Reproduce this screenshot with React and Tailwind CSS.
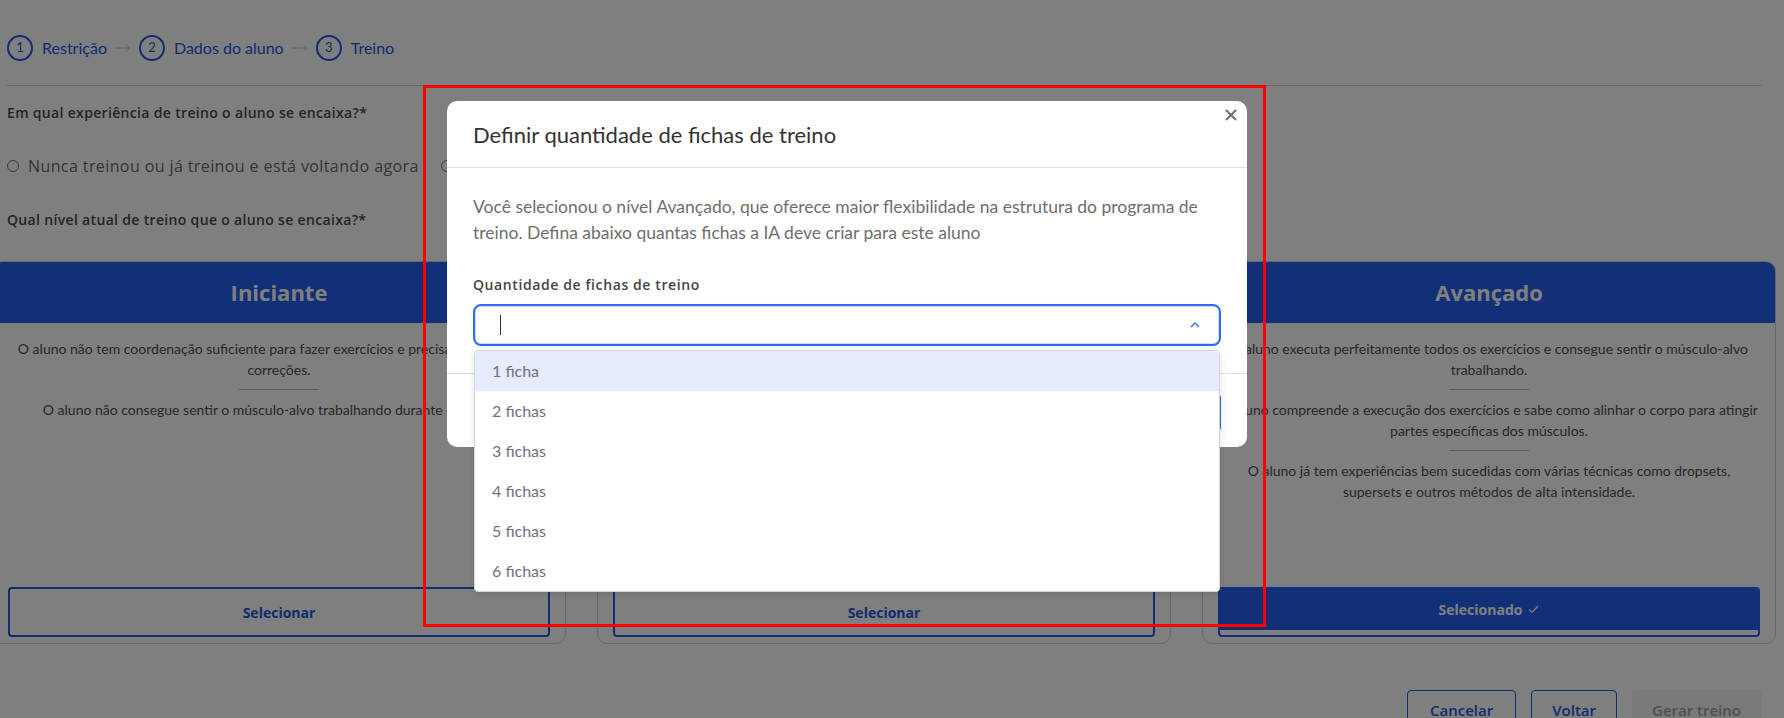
import React from "react";

const P = "font-['Open_Sans',sans-serif]";
const N = "font-['Lato',sans-serif]";

function Step({ n, label }) {
  return (
    <div className="flex items-center gap-[9px]">
      <div className={`w-[26px] h-[26px] rounded-full border-2 border-[#2458e0] flex items-center justify-center text-[13px] text-[#2458e0] ${N}`}>{n}</div>
      <span className={`text-[16px] text-[#2458e0] ${N}`}>{label}</span>
    </div>
  );
}

function Arrow() {
  return (
    <svg width="16" height="8" viewBox="0 0 16 8">
      <path d="M0 4H15M11.5 1L15 4L11.5 7" fill="none" stroke="#c4c4c4" strokeWidth="1" />
    </svg>
  );
}

function Card({ title, paras, selected }) {
  return (
    <div className="w-[574px] h-[383px] shrink-0 border border-[#d0d0d0] rounded-[10px] overflow-hidden flex flex-col">
      <div className={`h-[61px] shrink-0 bg-[#2260f0] flex items-center justify-center text-white text-[22px] font-bold ${P}`}>{title}</div>
      <div className={`px-[16px] pt-[15px] text-center text-[14px] leading-[21px] text-[#505050] ${N}`}>
        {paras.map((p, i) => (
          <div key={i}>
            {i > 0 && <div className="w-[80px] h-px bg-[#bdbdbd] mx-auto mt-[9px] mb-[9px]" />}
            <p>{p}</p>
          </div>
        ))}
      </div>
      {selected ? (
        <div className="mt-auto mx-[15px] mb-[6px] h-[50px] border-2 border-[#2260f0] rounded-[4px] flex flex-col overflow-hidden">
          <div className={`h-[41px] bg-[#2260f0] flex items-center justify-center gap-[6px] text-white text-[14px] font-bold ${P}`}>
            Selecionado
            <svg width="11" height="9" viewBox="0 0 11 9"><path d="M1 4.5L4 7.5L10 1" fill="none" stroke="#fff" strokeWidth="1.2" /></svg>
          </div>
        </div>
      ) : (
        <div className={`mt-auto mx-[15px] mb-[6px] h-[50px] border-2 border-[#2458e0] rounded-[4px] flex items-center justify-center text-[#2458e0] text-[14px] font-bold ${P}`}>
          Selecionar
        </div>
      )}
    </div>
  );
}

export default function App() {
  return (
    <div className="relative w-[1784px] h-[718px] overflow-hidden bg-white">
      <div className="pl-[7px] pr-[23px]">
        <div className="pt-[35px] flex items-center gap-[8px]">
          <Step n="1" label="Restrição" />
          <Arrow />
          <Step n="2" label="Dados do aluno" />
          <Arrow />
          <Step n="3" label="Treino" />
        </div>
        <div className="mt-[24px] border-t border-[#cccccc]" />
        <div className={`mt-[17px] text-[14px] leading-[20px] font-semibold tracking-[0.33px] text-[#4a4a4a] ${P}`}>Em qual experiência de treino o aluno se encaixa?*</div>
        <div className={`mt-[31px] flex items-center gap-[22px] text-[16px] leading-[24px] tracking-[0.4px] text-[#6a6a6a] ${P}`}>
          <label className="flex items-center gap-[9px]">
            <span className="w-[12px] h-[12px] rounded-full border border-[#777]" />
            Nunca treinou ou já treinou e está voltando agora
          </label>
          <label className="flex items-center gap-[9px]">
            <span className="w-[12px] h-[12px] rounded-full border border-[#777]" />
            Treina regularmente há mais de 6 meses
          </label>
        </div>
        <div className={`mt-[32px] text-[14px] leading-[20px] font-semibold tracking-[0.33px] text-[#4a4a4a] ${P}`}>Qual nível atual de treino que o aluno se encaixa?*</div>
        <div className="mt-[31px] ml-[-15px] flex gap-[31px]">
          <Card
            title="Iniciante"
            paras={[
              "O aluno não tem coordenação suficiente para fazer exercícios e precisa de constantes correções.",
              "O aluno não consegue sentir o músculo-alvo trabalhando durante o exercício.",
            ]}
          />
          <Card
            title="Intermediário"
            paras={[
              "O aluno executa bem a maioria dos exercícios e sente o músculo-alvo trabalhando.",
              "O aluno ainda precisa de algumas correções em exercícios mais complexos.",
            ]}
          />
          <Card
            title="Avançado"
            selected
            paras={[
              "O aluno executa perfeitamente todos os exercícios e consegue sentir o músculo-alvo trabalhando.",
              "O aluno compreende a execução dos exercícios e sabe como alinhar o corpo para atingir partes específicas dos músculos.",
              "O aluno já tem experiências bem sucedidas com várias técnicas como dropsets, supersets e outros métodos de alta intensidade.",
            ]}
          />
        </div>
        <div className={`mt-[46px] flex justify-end gap-[15px] text-[15px] font-semibold ${P}`}>
          <button className="h-[40px] px-[22px] border border-[#2458e0] rounded-[4px] text-[#2458e0]">Cancelar</button>
          <button className="h-[40px] px-[20px] border border-[#2458e0] rounded-[4px] text-[#2458e0]">Voltar</button>
          <button className="h-[40px] px-[20px] rounded-[4px] bg-[#f2f2f2] text-[#a0a0a0]">Gerar treino</button>
        </div>
      </div>

      <div className="absolute inset-0 bg-black/50" />

      <div className="absolute left-[447px] top-[101px] w-[800px] bg-white rounded-[10px]">
        <div className="h-[67px] px-[26px] flex items-center border-b border-[#e3e3e3]">
          <span className={`text-[22px] text-[#333] ${N}`}>Definir quantidade de fichas de treino</span>
        </div>
        <svg className="absolute left-[778px] top-[8px]" width="12" height="12" viewBox="0 0 12 12">
          <path d="M1 1L11 11M11 1L1 11" stroke="#707070" strokeWidth="2" />
        </svg>
        <div className="px-[26px] pt-[26px] pb-[27px]">
          <p className={`text-[17.5px] leading-[26px] text-[#6e6e6e] ${N}`}>
            Você selecionou o nível Avançado, que oferece maior flexibilidade na estrutura do programa de
            <br />
            treino. Defina abaixo quantas fichas a IA deve criar para este aluno
          </p>
          <div className={`mt-[29px] text-[14px] leading-[20px] font-semibold tracking-[0.6px] text-[#444] ${P}`}>Quantidade de fichas de treino</div>
          <div className="relative mt-[9px] h-[42px] border-2 border-[#2f6bf0] rounded-[8px] shadow-[inset_0_0_0_1px_#d3defb]">
            <div className="absolute left-[25px] top-[9px] h-[20px] w-px bg-[#333]" />
            <svg className="absolute right-[19px] top-[16px]" width="10" height="6" viewBox="0 0 10 6">
              <path d="M1 5L5 1L9 5" fill="none" stroke="#2f6bf0" strokeWidth="1.4" />
            </svg>
            <div className={`absolute left-[-1px] right-[-1px] top-[44px] bg-white border border-[#d6d6d6] rounded-[4px] shadow-[0_2px_6px_rgba(0,0,0,0.12)] z-10 text-[16px] text-[#6b7280] ${N}`}>
              {["1 ficha", "2 fichas", "3 fichas", "4 fichas", "5 fichas", "6 fichas"].map((o, i) => (
                <div key={o} className={`h-[40px] pl-[17px] flex items-center ${i === 0 ? "bg-[#e6ebfd]" : ""}`}>{o}</div>
              ))}
            </div>
          </div>
        </div>
        <div className="border-t border-[#e3e3e3] pt-[20px] pb-[16px] px-[26px] flex justify-end">
          <button className={`h-[37px] px-[24px] rounded-[4px] bg-[#2260f0] text-white text-[14px] font-semibold ${P}`}>Confirmar</button>
        </div>
      </div>

      <div className="absolute left-[423px] top-[85px] w-[843px] h-[542px] border-[3px] border-[#ff0000] pointer-events-none" />
    </div>
  );
}
